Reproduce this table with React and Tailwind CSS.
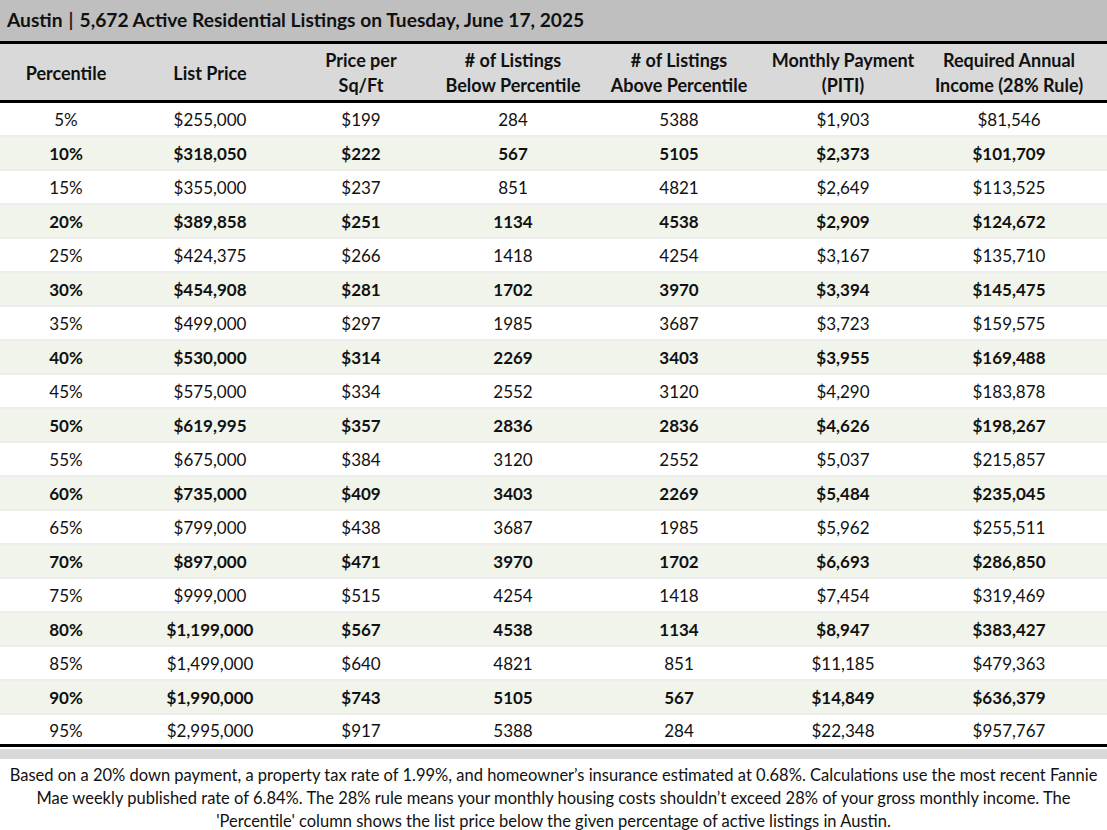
import React from "react";

const rows = [
  ["5%", "$255,000", "$199", "284", "5388", "$1,903", "$81,546"],
  ["10%", "$318,050", "$222", "567", "5105", "$2,373", "$101,709"],
  ["15%", "$355,000", "$237", "851", "4821", "$2,649", "$113,525"],
  ["20%", "$389,858", "$251", "1134", "4538", "$2,909", "$124,672"],
  ["25%", "$424,375", "$266", "1418", "4254", "$3,167", "$135,710"],
  ["30%", "$454,908", "$281", "1702", "3970", "$3,394", "$145,475"],
  ["35%", "$499,000", "$297", "1985", "3687", "$3,723", "$159,575"],
  ["40%", "$530,000", "$314", "2269", "3403", "$3,955", "$169,488"],
  ["45%", "$575,000", "$334", "2552", "3120", "$4,290", "$183,878"],
  ["50%", "$619,995", "$357", "2836", "2836", "$4,626", "$198,267"],
  ["55%", "$675,000", "$384", "3120", "2552", "$5,037", "$215,857"],
  ["60%", "$735,000", "$409", "3403", "2269", "$5,484", "$235,045"],
  ["65%", "$799,000", "$438", "3687", "1985", "$5,962", "$255,511"],
  ["70%", "$897,000", "$471", "3970", "1702", "$6,693", "$286,850"],
  ["75%", "$999,000", "$515", "4254", "1418", "$7,454", "$319,469"],
  ["80%", "$1,199,000", "$567", "4538", "1134", "$8,947", "$383,427"],
  ["85%", "$1,499,000", "$640", "4821", "851", "$11,185", "$479,363"],
  ["90%", "$1,990,000", "$743", "5105", "567", "$14,849", "$636,379"],
  ["95%", "$2,995,000", "$917", "5388", "284", "$22,348", "$957,767"],
];

const headers = [
  ["Percentile"],
  ["List Price"],
  ["Price per", "Sq/Ft"],
  ["# of Listings", "Below Percentile"],
  ["# of Listings", "Above Percentile"],
  ["Monthly Payment", "(PITI)"],
  ["Required Annual", "Income (28% Rule)"],
];

// column grid shared by header and body
const cols = "grid grid-cols-[132px_156px_146px_158px_174px_154px_178px_1fr]";

export default function App() {
  return (
    <div className="w-[1107px] h-[830px] overflow-hidden bg-white text-[#111] font-['Lato','Open_Sans',sans-serif]">
      {/* Title */}
      <div className="h-[41px] bg-[#bfbfbf] flex items-center pl-[7px] text-[19.2px] font-bold">
        <span>Austin</span>
        <span className="mx-[6px] text-[#4b0f14]">|</span>
        <span>5,672 Active Residential Listings on Tuesday, June 17, 2025</span>
      </div>
      <div className="h-[3px] bg-black" />

      {/* Header */}
      <div className={`${cols} h-[56px] pt-[2px] bg-[#d9d9d9] text-[18px] font-bold leading-[25px]`}>
        {headers.map((h, i) => (
          <div key={i} className="flex flex-col items-center justify-center whitespace-nowrap">
            {h.map((line, j) => (
              <span key={j}>{line}</span>
            ))}
          </div>
        ))}
        <div />
      </div>
      <div className="h-[3px] bg-black" />

      {/* Body */}
      <div className="text-[17px]">
        {rows.map((r, i) => {
          const shaded = i % 2 === 1;
          return (
            <div
              key={i}
              className={`${cols} h-[34px] pt-[2px] items-center border-b-2 border-[#ededed] last:border-b-0 last:h-[29px] ${
                shaded ? "bg-[#f0f4ea] font-bold" : "bg-white"
              }`}
            >
              {r.map((c, j) => (
                <div key={j} className="text-center">
                  {c}
                </div>
              ))}
              <div />
            </div>
          );
        })}
      </div>
      <div className="h-[3px] bg-black" />
      <div className="h-[2px] bg-white" />
      <div className="h-[10px] bg-[#d9d9d9]" />

      {/* Footnote */}
      <p className="pt-[5px] text-center text-[16.5px] leading-[23px] whitespace-nowrap">
        Based on a 20% down payment, a property tax rate of 1.99%, and homeowner’s insurance estimated at 0.68%. Calculations use the most recent Fannie
        <br />
        Mae weekly published rate of 6.84%. The 28% rule means your monthly housing costs shouldn’t exceed 28% of your gross monthly income. The
        <br />
        'Percentile' column shows the list price below the given percentage of active listings in Austin.
      </p>
    </div>
  );
}
